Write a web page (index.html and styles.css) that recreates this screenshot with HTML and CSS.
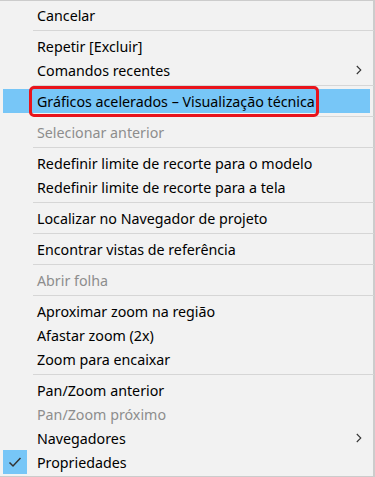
FILE: index.html
```html
<!DOCTYPE html>
<html>
<head>
<meta charset="utf-8">
<link rel="stylesheet" href="styles.css">
</head>
<body>
<div class="menu">
  <div class="item"><span class="label">Cancelar</span></div>
  <div class="sep"></div>
  <div class="item"><span class="label">Repetir [Excluir]</span></div>
  <div class="item"><span class="label">Comandos recentes</span><span class="chev"><svg width="6" height="10" viewBox="0 0 6 10"><path d="M0.8 1 L4.8 5 L0.8 9" fill="none" stroke="#333" stroke-width="1.1"/></svg></span></div>
  <div class="sep"></div>
  <div class="item active"><span class="label">Gráficos acelerados – Visualização técnica</span><span class="redbox"></span></div>
  <div class="sep"></div>
  <div class="item disabled"><span class="label">Selecionar anterior</span></div>
  <div class="sep"></div>
  <div class="item"><span class="label">Redefinir limite de recorte para o modelo</span></div>
  <div class="item"><span class="label">Redefinir limite de recorte para a tela</span></div>
  <div class="sep"></div>
  <div class="item"><span class="label">Localizar no Navegador de projeto</span></div>
  <div class="sep"></div>
  <div class="item"><span class="label">Encontrar vistas de referência</span></div>
  <div class="sep"></div>
  <div class="item disabled"><span class="label">Abrir folha</span></div>
  <div class="sep"></div>
  <div class="item"><span class="label">Aproximar zoom na região</span></div>
  <div class="item"><span class="label">Afastar zoom (2x)</span></div>
  <div class="item"><span class="label">Zoom para encaixar</span></div>
  <div class="sep"></div>
  <div class="item"><span class="label">Pan/Zoom anterior</span></div>
  <div class="item disabled"><span class="label">Pan/Zoom próximo</span></div>
  <div class="item"><span class="label">Navegadores</span><span class="chev"><svg width="6" height="10" viewBox="0 0 6 10"><path d="M0.8 1 L4.8 5 L0.8 9" fill="none" stroke="#333" stroke-width="1.1"/></svg></span></div>
  <div class="item"><span class="check"><svg width="14" height="12" viewBox="0 0 14 12"><path d="M1.5 6.5 L5 10 L12.5 2" fill="none" stroke="#333" stroke-width="1.5"/></svg></span><span class="label">Propriedades</span></div>
</div>
</body>
</html>
```
FILE: styles.css
```css
html, body {
  margin: 0;
  padding: 0;
  background: #f2f2f2;
}
.menu {
  width: 375px;
  height: 477px;
  box-sizing: border-box;
  border-top: 1px solid #cccccc;
  border-right: 2px solid #cccccc;
  border-bottom: 1px solid #cccccc;
  background: #f2f2f2;
  padding: 2px 0 0 3px;
  font-family: "Noto Sans", "Open Sans", sans-serif;
  font-size: 14.25px;
  color: #000;
}
.item {
  position: relative;
  height: 24px;
  width: 367px;
  display: flex;
  align-items: center;
}
.label {
  padding-left: 34px;
  white-space: nowrap;
}
.item.active {
  background: #77c6f7;
}
.item.disabled {
  color: #8d8d8d;
}
.sep {
  height: 7px;
  display: flex;
  align-items: center;
  margin-left: 30px;
  width: 341px;
}
.sep::after {
  content: "";
  display: block;
  height: 1px;
  width: 100%;
  background: #d6d6d6;
}
.chev {
  position: absolute;
  right: 8px;
  top: 7px;
  display: flex;
}
.check {
  position: absolute;
  left: 0;
  top: 0;
  width: 24px;
  height: 24px;
  background: #77c6f7;
  display: flex;
  align-items: center;
  justify-content: center;
}
.redbox {
  position: absolute;
  left: 26px;
  top: -3px;
  width: 290px;
  height: 31px;
  box-sizing: border-box;
  border: 3px solid #e8141c;
  border-radius: 5px;
}
```
